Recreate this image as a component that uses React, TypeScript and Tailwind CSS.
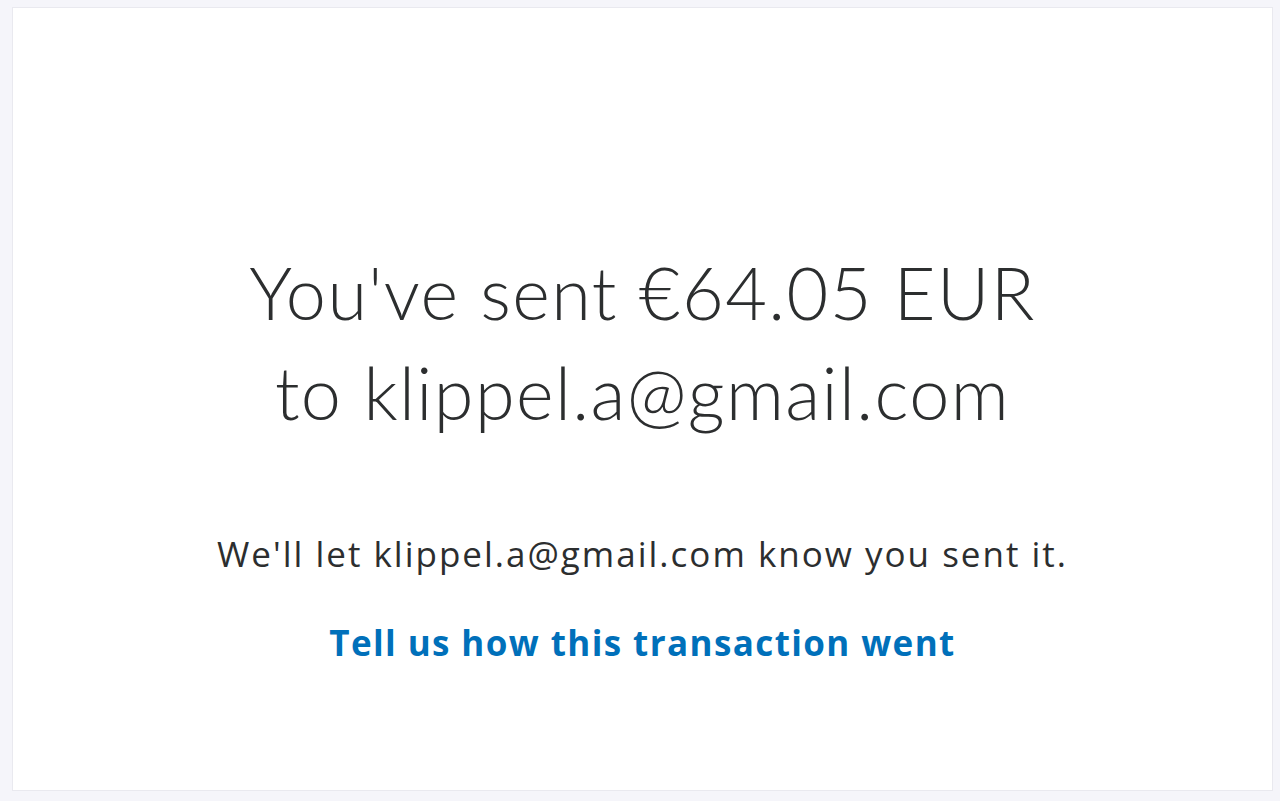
export default function App() {
  return (
    <div className="flex h-[801px] w-[1280px] bg-[#f5f5fa] pb-[10px] pl-[12px] pr-[7px] pt-[7px]">
      <div className="flex flex-1 flex-col items-center border border-[#e9e9ef] bg-white pt-[234px] text-center">
        <h1 className="font-['Lato',sans-serif] text-[72px] font-light leading-[100px] tracking-[1.4px] text-[#2c2e2f]">
          You've sent €64.05 EUR
          <br />
          to klippel.a@gmail.com
        </h1>
        <p className="mt-[90px] font-['Open_Sans',sans-serif] text-[35px] leading-[44px] tracking-[2px] text-[#2c2e2f]">
          We'll let klippel.a@gmail.com know you sent it.
        </p>
        <a
          href="#"
          className="mt-[45px] font-['Open_Sans',sans-serif] text-[35px] font-bold leading-[44px] tracking-[1.4px] text-[#0070ba]"
        >
          Tell us how this transaction went
        </a>
      </div>
    </div>
  );
}
